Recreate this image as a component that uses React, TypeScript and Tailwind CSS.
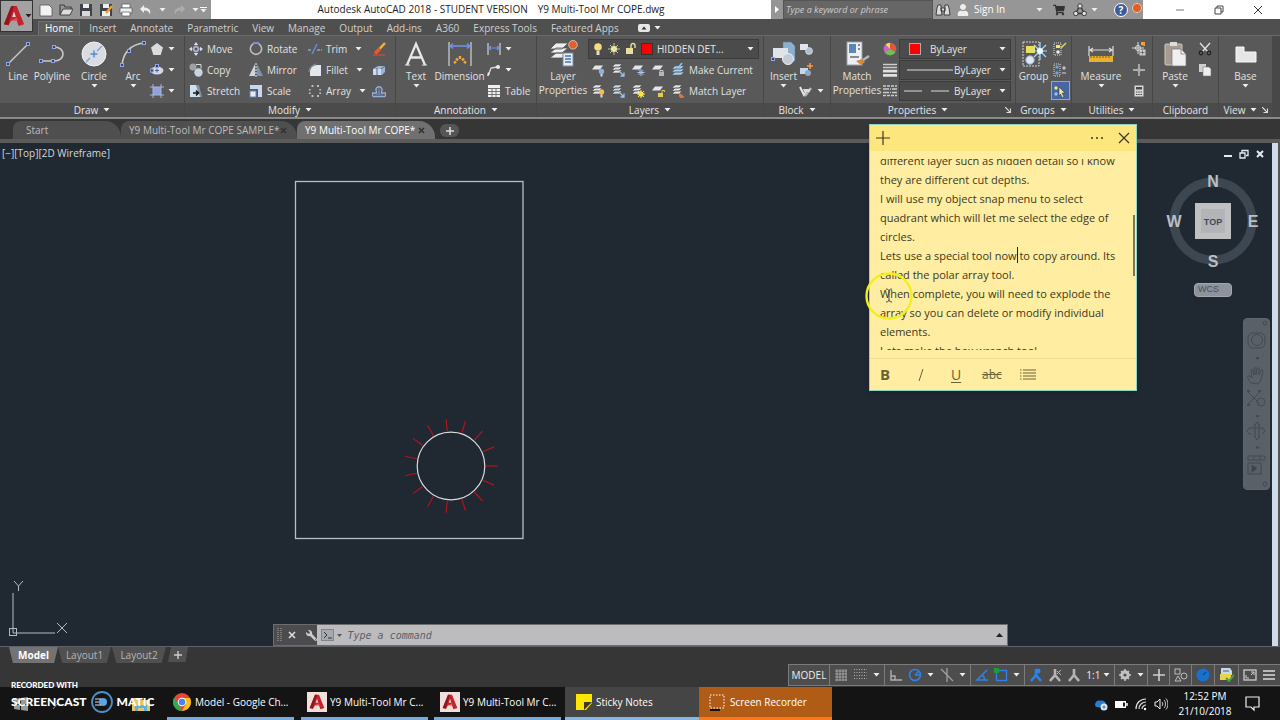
import React from "react";
import { FaWrench, FaShoppingCart, FaUser } from "react-icons/fa";

type Kids = { children?: React.ReactNode };

function Ico({ w = 14, h = 14, box, children }: Kids & { w?: number; h?: number; box?: string }) {
  return (
    <svg width={w} height={h} viewBox={box ?? `0 0 ${w} ${h}`} fill="none" className="block shrink-0" aria-hidden="true">
      {children}
    </svg>
  );
}

function Caret({ dark = false, up = false }: { dark?: boolean; up?: boolean }) {
  return (
    <Ico w={7} h={4}>
      <path d={up ? "M0 4h7L3.500 0z" : "M.5 0h6L3.500 3.500z"} fill={dark ? "#222" : "#eee"} />
    </Ico>
  );
}

function Node({ x, y }: { x: number; y: number }) {
  return <rect x={x - 1.5} y={y - 1.5} width="3" height="3" fill="#39435f" stroke="#8fa6ee" strokeWidth="1" />;
}

/* ---------- small ribbon icons (14 x 14) ---------- */

const polygonIcon = <Ico><path d="M7 1l6 4.500L10.700 13H3.300L1 5.500z" fill="#d9dbdf" /></Ico>;
const ellipseIcon = <Ico><ellipse cx="7" cy="7.500" rx="6.500" ry="4" fill="#d5d8e2" /><path d="M7 5.500v4M5 7.500h4" stroke="#4a5db0" /><Node x={7} y={3} /><Node x={1.8} y={7.5} /></Ico>;
const hatchIcon = <Ico><rect x="3" y="3" width="8" height="8" fill="#8ea2dc" /><path d="M3 0v14M11 0v14M0 3h14M0 11h14" stroke="#a9b4d8" /></Ico>;
const moveIcon = <Ico><path d="M7 0l2.200 3H4.800zM7 14l2.200-3H4.800zM0 7l3-2.200v4.400zM14 7l-3-2.200v4.400z" fill="#d5def5" /><path d="M7 3v8M3 7h8" stroke="#9eb2e6" /><rect x="5" y="5" width="4" height="4" fill="#555" stroke="#d5def5" /></Ico>;
const copyIcon = <Ico><circle cx="4" cy="4" r="3.500" fill="#9da2a8" /><circle cx="9.500" cy="9.500" r="4.200" fill="#c5d6e2" /><path d="M7 1.500h5v4" stroke="#ddd" /></Ico>;
const stretchIcon = <Ico><path d="M1 1h6l5 12H1z" fill="#cfe0ee" /><path d="M7 1h3l3 12h-2z" fill="#7f94a8" /><path d="M4 9h5M7 6.500L9.500 9 7 11.500" stroke="#151515" strokeWidth="1.500" /></Ico>;
const rotateIcon = <Ico><path d="M9.500 1.800A5.600 5.600 0 1 1 4.500 1.800" stroke="#b9bcc4" strokeWidth="1.600" /><path d="M4 1h6" stroke="#7f93d9" strokeWidth="1.800" /></Ico>;
const mirrorIcon = <Ico><path d="M6 1v12H0z" fill="#cfd4da" /><path d="M8 1v12h6z" fill="#7894ad" /><path d="M7 0v14" stroke="#eee" strokeDasharray="2 1" /></Ico>;
const scaleIcon = <Ico><path d="M1 1h12v12H9V5H1z" fill="#c9d7f0" /><rect x="1" y="7" width="6" height="6" fill="#e8edf5" stroke="#5f83c4" /></Ico>;
const trimIcon = <Ico><path d="M0 8h4M9 8h5" stroke="#8fa2c8" strokeWidth="1.400" strokeDasharray="3 1" /><path d="M4 12L9 2" stroke="#6a8ae0" strokeWidth="1.600" /></Ico>;
const filletIcon = <Ico><path d="M2 13V9c0-4 3-7 7-7h4v11z" fill="#e3e6ea" /><path d="M1 9c0-4 3-7 7-8" stroke="#7d96c9" /></Ico>;
const arrayIcon = <Ico><path d="M3.500 2h2M9 2h2M3.500 12h2M9 12h2" stroke="#bdbdbd" strokeWidth="1.800" /><path d="M1.800 5v1.500M12.200 5v1.500M1.800 8.500V10M12.200 8.500V10" stroke="#bdbdbd" strokeWidth="1.800" /></Ico>;
const eraseIcon = <Ico><path d="M1 13h12" stroke="#d94a2b" strokeWidth="1.200" /><path d="M13 1L7 7.500" stroke="#f0b23c" strokeWidth="2.500" /><path d="M8 6.500L3 11.500" stroke="#e35b2c" strokeWidth="3.500" /></Ico>;
const explodeIcon = <Ico><path d="M1 6l5-3h7v6l-3 3H1z" fill="#9bb4d2" /><path d="M1 6h8v6H1z" fill="#cddcec" /><path d="M9 6l4-3M5 5v7" stroke="#4e6b92" /></Ico>;
const offsetIcon = <Ico><path d="M.5 12.500h13M.5 12v-3h4V7.500a3 3 0 1 1 5 0V9h4v3" stroke="#96afd8" strokeWidth="1.300" /><path d="M3 10.700h3.500V6.500a1 1 0 1 1 1 0v4.200H11" stroke="#6882b4" /></Ico>;
const linearIcon = <Ico><path d="M1 1v12M13 1v12" stroke="#c8c8c8" strokeWidth="1.300" /><path d="M2 6h10M4 4L2 6l2 2M10 4l2 2-2 2" stroke="#6d93ee" strokeWidth="1.200" /></Ico>;
const leaderIcon = <Ico><path d="M1 13L4 5l6-1" stroke="#ddd" strokeWidth="1.300" /><circle cx="11" cy="4" r="2" fill="#eee" /><path d="M0 13l1-4 2 2z" fill="#eee" /></Ico>;
const tableIcon = <Ico><rect x="1" y="1" width="12" height="12" fill="#f0f0f0" /><path d="M1 4.500h12M1 7.500h12M1 10.500h12M5 4v9M9 4v9" stroke="#6a6a6a" strokeWidth=".9" /></Ico>;

function LayerStack({ badge, tone = "#e6e9ec" }: { badge: React.ReactNode; tone?: string }) {
  return (
    <Ico>
      <path d="M4 1h7L8 4H1zM4 4h7L8 7H1zM4 7h7l-3 3H1z" fill={tone} stroke="#4b4b4b" strokeWidth=".6" />
      {badge}
    </Ico>
  );
}
function LayerFlat({ badge }: { badge: React.ReactNode }) {
  return (
    <Ico>
      <path d="M4 2.500h8L9 6.500H1z" fill="#e2e6ea" />
      {badge}
    </Ico>
  );
}
const bulbBadge = <g><circle cx="10.500" cy="8" r="2.700" fill="#f2c04a" /><rect x="9.500" y="10.500" width="2" height="3" fill="#ddd" /></g>;
const blueBulb = <g><circle cx="10.500" cy="8.500" r="2.700" fill="#8bb2e0" /><rect x="9.500" y="11" width="2" height="2.500" fill="#ddd" /></g>;
const arrowBadge = <path d="M8 8l5 5M13 9.500V13H9.500" stroke="#9ec4ea" strokeWidth="1.300" />;
const snowBadge = <path d="M10 6v7M6.500 9.500h7M7.500 7l5 5M12.500 7l-5 5" stroke="#a9c6f2" />;
const sunBadge = <g><circle cx="10" cy="10" r="2.600" fill="#ffe14d" /><path d="M10 6v8M6 10h8M7 7l6 6M13 7l-6 6" stroke="#ffe14d" /></g>;
const lockBadge = <g><rect x="8" y="9" width="5" height="4" fill="#b3b7bd" /><path d="M9 9V7.500h3V9" stroke="#ccc" /></g>;
const openLockBadge = <g><rect x="7" y="9" width="5" height="4" fill="#e8c94a" /><path d="M11 9V6.500h2.500V8" stroke="#e8c94a" /></g>;
const matchBadge = <path d="M8 9l5 4-4 .5z" fill="#e0793a" stroke="#e0793a" />;
const currentIcon = <Ico><path d="M4 3h9l-3 3H1zM4 6h9l-3 3H1zM4 9h9l-3 3H1z" fill="#b9d2e4" stroke="#4d6b80" strokeWidth=".7" /><path d="M11 0L7 5 5 3.500" stroke="#8fc3ea" strokeWidth="1.600" /></Ico>;

const blockCreate = <Ico><path d="M1 2h8v6H1z" fill="#dfe5ee" /><circle cx="10" cy="9" r="3.500" fill="#aebfd3" stroke="#e8e8e8" strokeWidth=".6" /></Ico>;
const blockEdit = <Ico><path d="M1 5h8v6H1z" fill="#c9d6ea" /><circle cx="9" cy="10" r="3" fill="#8fa9c9" /><path d="M11 0v6M8 3h6" stroke="#ff9b3a" strokeWidth="1.500" /></Ico>;
const blockAttr = <Ico><path d="M1 3l4 8 2-3" stroke="#e8e8e8" strokeWidth="2" /><path d="M6 12L12 4" stroke="#b8b8b8" strokeWidth="2.400" /><path d="M4 5h7v3H5z" fill="#d8d8d8" /></Ico>;
const wheelIcon = <Ico><circle cx="7" cy="7" r="6.200" fill="#4b86d8" /><path d="M7 7V.8A6.200 6.200 0 0 1 12.400 10z" fill="#e5563a" /><path d="M7 7l5.400 3A6.200 6.200 0 0 1 1.600 10z" fill="#6fc152" /><path d="M7 7L1.600 10A6.200 6.200 0 0 1 2.600 2.600z" fill="#cf62c8" /><path d="M7 7V.8A6.200 6.200 0 0 0 2.600 2.600z" fill="#f3df55" /></Ico>;
const lineweightIcon = <Ico><path d="M0 1.500h14M0 4.500h14" stroke="#ccc" strokeWidth="1.300" /><path d="M0 8.200h14M0 12.400h14" stroke="#e0e0e0" strokeWidth="2.800" /></Ico>;
const linetypeIcon = <Ico><path d="M0 2h14M0 11.500h14" stroke="#ccc" strokeWidth="1.500" strokeDasharray="3 1" /><path d="M0 5h14M0 8.500h14" stroke="#ccc" strokeWidth="1.500" strokeDasharray="6 1 1 1" /></Ico>;
const groupEdit = <Ico><path d="M1 1h7v12H1z" stroke="#ddd" strokeDasharray="1 1" /><rect x="3" y="3" width="4" height="3" fill="#f2ec5a" /><circle cx="5" cy="10" r="1.800" fill="#eee" /><path d="M8 6l5-5" stroke="#d8d84c" strokeWidth="1.600" /></Ico>;
const ungroup = <Ico><path d="M1 1h6v12H1z" stroke="#ddd" strokeDasharray="1 1" /><circle cx="4" cy="4" r="1.700" fill="#6fa3de" /><circle cx="4" cy="10" r="1.700" fill="#6fa3de" /><path d="M9 5h4M11 3v4M9 10h4" stroke="#ddd" /></Ico>;
const groupSelect = <Ico><circle cx="3" cy="4" r="1.700" fill="#f2ec5a" /><circle cx="3" cy="10" r="1.700" fill="#9cc3f5" /><path d="M6 3l6 6H9l2 4-2 .5-1.500-3.500L6 12z" fill="#e9e9a0" stroke="#333" strokeWidth=".5" /></Ico>;
const idPoint = <Ico><path d="M6 0v12M0 6h12" stroke="#ddd" /><circle cx="6" cy="6" r="2.500" stroke="#ddd" /><path d="M9 0h4v4L9 3z" fill="#f0a040" /><rect x="7.500" y="7.500" width="6" height="6" fill="#ccc" /><path d="M8.500 10.500h4M10.500 8.500v4" stroke="#555" strokeWidth=".7" /></Ico>;
const pointStyle = <Ico><path d="M7 1v12M1 7h12" stroke="#c8c8c8" strokeWidth="1.400" /><circle cx="7" cy="7" r="2" fill="#aaa" /></Ico>;
const calcIcon = <Ico><rect x="2.500" y="1.500" width="9" height="11" fill="#d8d8d8" /><rect x="4" y="3" width="6" height="2.500" fill="#4c4c4c" /><path d="M4 8h6M4 10.500h6" stroke="#4c4c4c" strokeDasharray="1.500 .7" /></Ico>;
const cutIcon = <Ico><path d="M2 1l8 9M12 1L4 10" stroke="#e2e2e2" strokeWidth="1.300" /><circle cx="3" cy="11" r="1.800" stroke="#222" strokeWidth="1.200" /><circle cx="11" cy="11" r="1.800" stroke="#222" strokeWidth="1.200" /></Ico>;
const copyClip = <Ico><path d="M1 1h7v8H1z" fill="#cfcfcf" /><path d="M5 4h6l2 2v7H5z" fill="#efefef" stroke="#777" strokeWidth=".6" /></Ico>;

/* ---------- large ribbon icons ---------- */

const lineBig = <Ico w={26} h={26}><path d="M3 23L23 3" stroke="#c9c9c9" strokeWidth="1.500" /><Node x={3} y={23} /><Node x={23} y={3} /></Ico>;
const polyBig = <Ico w={26} h={26}><path d="M2 20h13c12 0 12-14 0-14" stroke="#c9c9c9" strokeWidth="1.600" /><Node x={2} y={20} /><Node x={14} y={20} /><Node x={15} y={6} /></Ico>;
const circleBig = (
  <Ico w={26} h={26}>
    <circle cx="13" cy="13" r="12" fill="#d9dde2" stroke="#f2f2f2" />
    <path d="M5 21l4-4M16 10l5-5" stroke="#7f9cd6" strokeWidth="1.300" />
    <path d="M13 9.500v7M9.500 13h7" stroke="#4f86dc" strokeWidth="1.400" />
  </Ico>
);
const arcBig = <Ico w={26} h={26}><path d="M2 24C3 12 11 3 24 2" stroke="#c9c9c9" strokeWidth="1.600" /><Node x={2} y={24} /><Node x={9} y={10} /><Node x={24} y={2} /></Ico>;
const textBig = <Ico w={26} h={26}><path d="M4 24L13 3l9 21M7.500 16.500h11" stroke="#e6e6e6" strokeWidth="2.300" /><path d="M2 24h5M19 24h5" stroke="#e6e6e6" strokeWidth="1.200" /></Ico>;
const dimBig = (
  <Ico w={26} h={26}>
    <path d="M2 1v24M24 1v24" stroke="#c9c9c9" strokeWidth="1.300" />
    <path d="M3 5h20M6 2.500L3 5l3 2.500M20 2.500L23 5l-3 2.500" stroke="#6d93ee" strokeWidth="1.300" />
    <path d="M7 22l2-1.500M9 17.500l2 2M13 15v3M17 17.500l-2 2M19 22l-2-1.500" stroke="#f2a93b" strokeWidth="2.400" />
  </Ico>
);
const layerBig = (
  <Ico w={30} h={28}>
    <path d="M8 3h12l-6 6H2zM8 8h12l-6 5H2zM8 13h12l-6 5H2z" fill="#eceef0" stroke="#555" strokeWidth=".8" />
    <rect x="15" y="13" width="10" height="13" fill="#e9eef6" stroke="#7f8a9a" />
    <path d="M17 16h6M17 19h6M17 22h6" stroke="#4471b8" strokeWidth="1.300" />
    <circle cx="25" cy="4.800" r="4.300" fill="#de6228" stroke="#e9e2dc" strokeWidth=".7" />
  </Ico>
);
const insertBig = (
  <Ico w={26} h={26}>
    <path d="M12 1h8l4 4v15H12z" fill="#8eb0cf" stroke="#5e7c99" strokeWidth=".6" />
    <path d="M2 7h15v10H2z" fill="#dfe4ea" />
    <circle cx="17" cy="18" r="5.500" fill="#c1ccd8" stroke="#eee" />
    <Node x={2} y={18} />
  </Ico>
);
const matchBig = (
  <Ico w={26} h={26}>
    <rect x="3" y="1" width="15" height="23" fill="#ecEFf4" stroke="#9aa0a8" />
    <rect x="5" y="3" width="7" height="9" fill="#5b86b8" />
    <path d="M14 4h2M14 8h2M6 16h9" stroke="#6b6b6b" strokeWidth="1.300" />
    <path d="M12 20l6-2 3 3-4 3z" fill="#d88938" /><path d="M19 19l6-4" stroke="#b8b8b8" strokeWidth="2.500" />
  </Ico>
);
const groupBig = (
  <Ico w={26} h={26}>
    <path d="M2 1h16v24H2z" stroke="#d5d5d5" strokeDasharray="2 1" />
    <rect x="5" y="5" width="9" height="7" fill="#e8e05a" /><circle cx="9" cy="19" r="4.300" fill="#dfe8f2" stroke="#8aa3bf" />
    <path d="M19 1v18M10 10h16M13 4l12 12M25 4L13 16" stroke="#a8dcff" strokeWidth="1.200" /><circle cx="19" cy="10" r="3" fill="#e8f8ff" />
  </Ico>
);
const measureBig = (
  <Ico w={26} h={26}>
    <path d="M1 5v10M25 5v10M2 9h22M5 7L2 9l3 2M21 7l3 2-3 2" stroke="#dcdcdc" strokeWidth="1.200" />
    <rect x="1" y="15" width="24" height="6" fill="#e9b22e" /><path d="M3 15v2M6 15v2M9 15v2M12 15v2M15 15v2M18 15v2M21 15v2" stroke="#7a5b12" />
  </Ico>
);
const pasteBig = (
  <Ico w={26} h={26}>
    <rect x="3" y="3" width="17" height="21" rx="1" fill="#a79c90" stroke="#d0c8bd" /><rect x="8" y="1" width="7" height="4" fill="#ddd" />
    <path d="M10 8h9l5 5v12H10z" fill="#f0f0f0" stroke="#777" strokeWidth=".7" /><path d="M19 8v5h5" stroke="#777" strokeWidth=".7" />
  </Ico>
);
const baseBig = <Ico w={26} h={26}><path d="M3 6h8v5h12v10H3z" fill="#e6e6e6" stroke="#fafafa" /></Ico>;

/* ---------- ribbon building blocks ---------- */

function Big({ icon, label, caret, width }: { icon: React.ReactNode; label: string[]; caret?: boolean; width: string }) {
  return (
    <button className={`${width} flex shrink-0 flex-col items-center text-[#e2e2e2]`}>
      <span className="flex h-[30px] items-center">{icon}</span>
      {label.map((l) => (
        <span key={l} className="h-[14px] whitespace-nowrap leading-[14px]">{l}</span>
      ))}
      {caret && <span className="mt-px"><Caret /></span>}
    </button>
  );
}

function Small({ icon, label, caret, name }: { icon: React.ReactNode; label?: string; caret?: boolean; name: string }) {
  return (
    <button aria-label={name} className="flex h-5 items-center gap-1 whitespace-nowrap text-[#e2e2e2]">
      {icon}
      {label && <span>{label}</span>}
      {caret && <span className={label ? "ml-1" : ""}><Caret /></span>}
    </button>
  );
}

function Col({ width, children }: Kids & { width: string }) {
  return <div className={`${width} flex shrink-0 flex-col gap-px`}>{children}</div>;
}

function Panel({ title, width, caret = true, launcher, children }: Kids & { title: string; width: string; caret?: boolean; launcher?: boolean }) {
  return (
    <section className={`${width} flex shrink-0 flex-col border-r border-[#474747] bg-[#595959]`}>
      <div className="flex flex-1 px-1 pt-[3px]">{children}</div>
      <div className="flex h-[14px] items-center bg-[#4b4b4b] text-[#e6e6e6]">
        <span className="flex flex-1 items-center justify-center gap-[5px]">
          {title}
          {caret && <Caret />}
        </span>
        {launcher && (
          <button aria-label={`${title} settings`} className="mr-1">
            <Ico w={6} h={6}><path d="M0 0l5 5M5.500 1.500v4h-4" stroke="#ddd" strokeWidth="1.200" /></Ico>
          </button>
        )}
      </div>
    </section>
  );
}

const comboBox = "flex items-center border border-[#3c3c3c] bg-[#4b4b4b] pr-1 text-[#e6e6e6]";

function PropertyCombo({ name, sample }: { name: string; sample: React.ReactNode }) {
  return (
    <div className={`${comboBox} h-5`}>
      <span className="w-[54px] overflow-hidden">{sample}</span>
      <select aria-label={name} className="min-w-0 flex-1 appearance-none bg-transparent outline-none">
        <option>ByLayer</option>
      </select>
      <Caret />
    </div>
  );
}

function Ribbon() {
  return (
    <div className="flex h-[84px] overflow-hidden border-t border-[#6a6a6a] border-b-2 border-b-[#8a8a8a] bg-[#484848]">
      <Panel title="Draw" width="w-[185px]">
        <Big width="w-[28px]" icon={lineBig} label={["Line"]} />
        <Big width="w-[40px]" icon={polyBig} label={["Polyline"]} />
        <Big width="w-[44px]" icon={circleBig} label={["Circle"]} caret />
        <Big width="w-[34px]" icon={arcBig} label={["Arc"]} caret />
        <Col width="w-[30px]">
          <Small name="Polygon" icon={polygonIcon} caret />
          <Small name="Ellipse" icon={ellipseIcon} caret />
          <Small name="Hatch" icon={hatchIcon} caret />
        </Col>
      </Panel>
      <Panel title="Modify" width="w-[211px]">
        <Col width="w-[60px]">
          <Small name="Move" icon={moveIcon} label="Move" />
          <Small name="Copy" icon={copyIcon} label="Copy" />
          <Small name="Stretch" icon={stretchIcon} label="Stretch" />
        </Col>
        <Col width="w-[59px]">
          <Small name="Rotate" icon={rotateIcon} label="Rotate" />
          <Small name="Mirror" icon={mirrorIcon} label="Mirror" />
          <Small name="Scale" icon={scaleIcon} label="Scale" />
        </Col>
        <Col width="w-[64px]">
          <Small name="Trim" icon={trimIcon} label="Trim" caret />
          <Small name="Fillet" icon={filletIcon} label="Fillet" caret />
          <Small name="Array" icon={arrayIcon} label="Array" caret />
        </Col>
        <Col width="w-[16px]">
          <Small name="Erase" icon={eraseIcon} />
          <Small name="Explode" icon={explodeIcon} />
          <Small name="Offset" icon={offsetIcon} />
        </Col>
      </Panel>
      <Panel title="Annotation" width="w-[141px]">
        <Big width="w-[32px]" icon={textBig} label={["Text"]} caret />
        <Big width="w-[55px]" icon={dimBig} label={["Dimension"]} />
        <Col width="w-[46px]">
          <Small name="Linear" icon={linearIcon} caret />
          <Small name="Leader" icon={leaderIcon} caret />
          <Small name="Table" icon={tableIcon} label="Table" />
        </Col>
      </Panel>
      <Panel title="Layers" width="w-[227px]">
        <Big width="w-[44px]" icon={layerBig} label={["Layer", "Properties"]} />
        <div className="ml-[3px] flex min-w-0 flex-1 flex-col gap-px">
          <div className={`${comboBox} h-5 gap-1 pl-1`}>
            <Ico w={10} h={14}><circle cx="5" cy="5" r="3.800" fill="#f6dc7c" /><rect x="3.500" y="9" width="3" height="4" fill="#ddd" /></Ico>
            <Ico><circle cx="7" cy="7" r="3" fill="#f5f0b0" /><path d="M7 1v12M1 7h12M3 3l8 8M11 3l-8 8" stroke="#e6dfa0" strokeWidth=".8" /></Ico>
            <Ico w={12}><rect x="1" y="6" width="7" height="6" fill="#eadf9a" /><path d="M6 6V3.500a2 2 0 0 1 4 0V6" stroke="#eadf9a" strokeWidth="1.400" /></Ico>
            <span className="h-3 w-3 border border-[#333] bg-[#ff0000]" />
            <select aria-label="Layer" className="min-w-0 flex-1 appearance-none bg-transparent outline-none">
              <option>HIDDEN DET...</option>
            </select>
            <Caret />
          </div>
          <div className="flex h-5 items-center gap-[6px] pl-[3px] text-[#e2e2e2]">
            <LayerFlat badge={blueBulb} />
            <LayerStack badge={arrowBadge} />
            <LayerFlat badge={snowBadge} />
            <LayerFlat badge={lockBadge} />
            <button className="flex items-center gap-1 whitespace-nowrap">{currentIcon}Make Current</button>
          </div>
          <div className="flex h-5 items-center gap-[6px] pl-[3px] text-[#e2e2e2]">
            <LayerStack badge={bulbBadge} />
            <LayerStack badge={arrowBadge} tone="#c9dcea" />
            <LayerStack badge={sunBadge} />
            <LayerFlat badge={openLockBadge} />
            <button className="flex items-center gap-1 whitespace-nowrap"><LayerStack badge={matchBadge} />Match Layer</button>
          </div>
        </div>
      </Panel>
      <Panel title="Block" width="w-[67px]">
        <Big width="w-[31px]" icon={insertBig} label={["Insert"]} caret />
        <Col width="w-[28px]">
          <Small name="Create block" icon={blockCreate} />
          <Small name="Edit block" icon={blockEdit} />
          <Small name="Edit attributes" icon={blockAttr} caret />
        </Col>
      </Panel>
      <Panel title="Properties" width="w-[185px]" launcher>
        <Big width="w-[44px]" icon={matchBig} label={["Match", "Properties"]} />
        <div className="ml-1 flex w-[16px] flex-col gap-px">
          <Small name="Colour" icon={wheelIcon} />
          <Small name="Lineweight" icon={lineweightIcon} />
          <Small name="Linetype" icon={linetypeIcon} />
        </div>
        <div className="flex min-w-0 flex-1 flex-col gap-px">
          <div className={`${comboBox} h-5`}>
            <span className="w-[30px] pl-[9px]"><span className="block h-3 w-3 border border-[#aaa] bg-[#ff0000]" /></span>
            <select aria-label="Object colour" className="min-w-0 flex-1 appearance-none bg-transparent outline-none">
              <option>ByLayer</option>
            </select>
            <Caret />
          </div>
          <PropertyCombo name="Object lineweight" sample={<Ico w={54} h={2}><path d="M7 1h46" stroke="#ddd" /></Ico>} />
          <PropertyCombo name="Object linetype" sample={<Ico w={54} h={2}><path d="M4 1h18M31 1h18" stroke="#ddd" /></Ico>} />
        </div>
      </Panel>
      <Panel title="Groups" width="w-[56px]">
        <Big width="w-[27px]" icon={groupBig} label={["Group"]} />
        <div className="ml-1 flex w-[18px] flex-col items-center gap-px">
          <Small name="Group edit" icon={groupEdit} />
          <Small name="Ungroup" icon={ungroup} />
          <button aria-label="Group selection" className="flex h-[19px] w-[19px] items-center justify-center border border-[#86a8dc] bg-[#4667a4]">{groupSelect}</button>
        </div>
      </Panel>
      <Panel title="Utilities" width="w-[81px]">
        <Big width="w-[50px]" icon={measureBig} label={["Measure"]} caret />
        <div className="ml-[6px]">
          <Col width="w-[16px]">
            <Small name="ID point" icon={idPoint} />
            <Small name="Point style" icon={pointStyle} />
            <Small name="Calculator" icon={calcIcon} />
          </Col>
        </div>
      </Panel>
      <Panel title="Clipboard" width="w-[66px]" caret={false}>
        <Big width="w-[36px]" icon={pasteBig} label={["Paste"]} caret />
        <div className="ml-[5px]">
          <Col width="w-[16px]">
            <Small name="Cut" icon={cutIcon} />
            <Small name="Copy clip" icon={copyClip} />
          </Col>
        </div>
      </Panel>
      <Panel title="View" width="w-[54px]" launcher>
        <Big width="w-[45px]" icon={baseBig} label={["Base"]} caret />
      </Panel>
    </div>
  );
}

/* ---------- title bar ---------- */

function AutoLogo({ size }: { size: number }) {
  return (
    <svg width={size} height={size} viewBox="0 0 24 24" className="block shrink-0" aria-hidden="true">
      <path d="M9 1h6l8 20-6 2-2-6H9l-3 5-5-1z" fill="#c4232d" />
      <path d="M9 1h3l-5 16-1 5-5-1z" fill="#8f1720" />
      <path d="M12 7l2 6h-4z" fill="#ead5d5" />
      <path d="M9 17l6-3 1 3z" fill="#e3535a" />
    </svg>
  );
}

function Header() {
  const tabs = ["Insert", "Annotate", "Parametric", "View", "Manage", "Output", "Add-ins", "A360", "Express Tools", "Featured Apps"];
  return (
    <header className="flex h-[35px] bg-[#4f4f4f]">
      <button aria-label="Application menu" className="flex h-8 w-[33px] shrink-0 items-center border border-[#333] bg-[#a2a2a2] pl-[2px]">
        <AutoLogo size={22} />
        <Caret dark />
      </button>
      <div className="flex min-w-0 flex-1 flex-col">
        <div className="flex h-[19px] bg-white">
          <div className="flex w-[178px] shrink-0 items-center bg-[#959595] pl-[6px]">
            <div className="flex flex-1 items-center gap-[6px]">
              <Ico><path d="M1 2h9l3 3v8H1z" fill="#f2f2f2" stroke="#555" strokeWidth=".8" /></Ico>
              <Ico><path d="M1 12V2h4l1 2h6v2" stroke="#444" strokeWidth="1.200" /><path d="M1 12l3-6h10l-3 6z" fill="#ddd" stroke="#444" /></Ico>
              <Ico><path d="M1 1h12v12H1z" fill="#3f4248" /><path d="M4 1h6v4H4z" fill="#eee" /><path d="M3 8h8v5H3z" fill="#d8d8d8" /></Ico>
              <Ico><path d="M1 1h12v12H1z" fill="#3f4248" /><path d="M4 1h6v4H4zM3 8h8v5H3z" fill="#eee" /><path d="M13 3l-6 7" stroke="#f0a030" strokeWidth="2.500" /></Ico>
              <Ico><path d="M3 1h8v4H3z" fill="#fff" stroke="#555" strokeWidth=".7" /><path d="M1 5h12v5H1z" fill="#eee" stroke="#555" strokeWidth=".7" /><path d="M3 9h8v4H3z" fill="#fff" stroke="#555" strokeWidth=".7" /></Ico>
              <Ico><path d="M5 2L1 6l4 4V7.500c4 0 5 1 6 4 1.500-5-2-7-6-7z" fill="#eee" /></Ico>
              <Caret />
              <Ico><path d="M9 2l4 4-4 4V7.500c-4 0-5 1-6 4-1.500-5 2-7 6-7z" fill="#adadad" /></Ico>
              <Caret />
            </div>
            <div className="mr-1 flex flex-col items-center gap-px"><span className="h-px w-[7px] bg-white" /><Caret /></div>
          </div>
          <h1 className="flex min-w-0 flex-1 items-center justify-center gap-[10px] whitespace-nowrap text-[10px] text-[#222]">
            <span>Autodesk AutoCAD 2018 - STUDENT VERSION</span>
            <span>Y9 Multi-Tool Mr COPE.dwg</span>
          </h1>
          <div className="flex w-[372px] shrink-0 items-center bg-[#969696]">
            <span className="flex w-3 justify-center"><Ico w={4} h={7}><path d="M0 0v7l4-3.500z" fill="#fff" /></Ico></span>
            <input aria-label="Search" placeholder="Type a keyword or phrase" className="h-[19px] w-[150px] border border-[#555] bg-[#666] px-[2px] text-[9px] italic text-white outline-none placeholder:text-[#ccc]" />
            <button aria-label="Find" className="ml-[2px]"><Ico w={16}><path d="M3 2h3v3l1 7H1l1-7zM10 2h3l1 3 1 7H9l1-7zM6 5h4v3H6z" fill="#ddd" stroke="#333" strokeWidth=".9" /></Ico></button>
            <button className="ml-[6px] flex flex-1 items-center gap-[5px] text-[10px] text-white"><FaUser className="h-3 w-3 text-[#eee]" />Sign In</button>
            <Caret />
            <FaShoppingCart className="ml-[10px] h-3 w-3 text-[#333]" />
            <span className="ml-2 mr-1"><Ico><path d="M7 2.500L2.500 10.500h9z" stroke="#333" strokeWidth="1.300" /><circle cx="7" cy="3" r="2.200" fill="#e6e6e6" stroke="#333" /><circle cx="2.800" cy="10.500" r="2.200" fill="#e6e6e6" stroke="#333" /><circle cx="11.200" cy="10.500" r="2.200" fill="#e6e6e6" stroke="#333" /></Ico></span>
            <Caret />
            <button aria-label="Help" className="ml-4 flex h-[14px] w-[14px] items-center justify-center rounded-full border border-white bg-[#3d5b98] text-[10px] font-bold leading-none text-white">?</button>
            <span className="mb-1 ml-1 mr-px h-[10px] w-[10px] rounded-full border border-[#eac5ae] bg-[#de6228]" />
          </div>
          <div className="flex w-[137px] shrink-0 items-center justify-between pl-8 pr-[17px]">
            <button aria-label="Minimise"><Ico w={10} h={10}><path d="M1 5h8" stroke="#777" /></Ico></button>
            <button aria-label="Restore"><Ico w={10} h={10}><path d="M1 3h6v6H1zM3 3V1h6v6H7" stroke="#444" /></Ico></button>
            <button aria-label="Close"><Ico w={10} h={10}><path d="M1 1l8 8M9 1L1 9" stroke="#333" /></Ico></button>
          </div>
        </div>
        <nav className="flex flex-1 items-end text-[#d0d0d0]">
          <a href="#home" className="ml-[5px] flex h-[14px] items-center border border-b-0 border-[#707070] bg-[#5d5d5d] px-[6px] text-white">Home</a>
          <div className="ml-[2px] flex">
            {tabs.map((t) => (
              <a key={t} href={`#${t}`} className="flex h-[14px] items-center whitespace-nowrap px-[7px]">{t}</a>
            ))}
          </div>
          <button aria-label="Ribbon display" className="ml-3 flex h-[14px] items-center gap-1">
            <Ico w={12} h={8}><rect width="12" height="8" rx="2" fill="#e6e6e6" /><path d="M3.500 5.500h5L6 2.500z" fill="#333" /></Ico>
            <Caret />
          </button>
        </nav>
      </div>
    </header>
  );
}

function FileTabs() {
  const x = <Ico w={7} h={7}><path d="M1 1l5 5M6 1L1 6" stroke="#303030" strokeWidth="1.500" /></Ico>;
  return (
    <div className="flex h-6 items-end whitespace-nowrap border-b-4 border-[#5b5b5b] bg-[#363636] pl-[13px] text-[#bdbdbd]">
      <a href="#start" className="flex h-[18px] w-[108px] items-center rounded-tl-lg rounded-tr-2xl bg-[#4f4f4f] pl-[13px]">Start</a>
      <a href="#sample" className="flex h-[18px] w-[176px] items-center justify-between rounded-tl-lg rounded-tr-2xl bg-[#4f4f4f] pl-2 pr-[10px]">Y9 Multi-Tool Mr COPE SAMPLE*{x}</a>
      <a href="#cope" className="flex h-[18px] w-[138px] items-center justify-between rounded-tl-lg rounded-tr-2xl bg-[#707070] pl-2 pr-[10px] text-white">Y9 Multi-Tool Mr COPE*{x}</a>
      <button aria-label="New drawing" className="mb-[2px] ml-[5px] flex h-[13px] w-[19px] items-center justify-center rounded-md bg-[#555]">
        <Ico w={8} h={8}><path d="M4 0v8M0 4h8" stroke="#ddd" strokeWidth="1.600" /></Ico>
      </button>
    </div>
  );
}

/* ---------- drawing area ---------- */

const spokes = Array.from({ length: 15 }, (_, i) => (i * 24 * Math.PI) / 180);

function Drawing() {
  return (
    <svg width="530" height="400" className="absolute left-0 top-0" fill="none" aria-label="Multi-tool drawing">
      <rect x="295.500" y="38.500" width="227.500" height="357" stroke="#b9bec4" strokeWidth="1.300" />
      {spokes.map((a) => (
        <path
          key={a}
          d={`M${451 + 35 * Math.cos(a)} ${323 - 35 * Math.sin(a)}L${451 + 47 * Math.cos(a)} ${323 - 47 * Math.sin(a)}`}
          stroke="#b3141e"
          strokeWidth="1.200"
        />
      ))}
      <circle cx="451" cy="323" r="33.800" stroke="#d9dde0" strokeWidth="1.200" />
    </svg>
  );
}

function ViewCube() {
  return (
    <div className="absolute right-[20px] top-[28px]">
      <svg width="94" height="100" viewBox="0 0 94 100" fontFamily="Liberation Sans, Arial, sans-serif" fontWeight="bold" fontSize="16" textAnchor="middle" fill="#b9bfc4" className="block">
        <circle cx="47" cy="50" r="39" fill="none" stroke="#3d4751" strokeWidth="9" />
        <rect x="29" y="32" width="36" height="36" fill="#bfc0c2" />
        <rect x="35" y="38" width="24" height="24" fill="#b2b4b8" />
        <text x="47" y="54" fontSize="9" fill="#404a57">TOP</text>
        <text x="47" y="16">N</text>
        <text x="47" y="96">S</text>
        <text x="8" y="56">W</text>
        <text x="87" y="56">E</text>
      </svg>
      <button className="ml-[28px] mt-[12px] flex h-[14px] w-[38px] items-center rounded border border-[#a3a8b0] bg-[#8d929b] pl-[3px] font-['Liberation_Sans',sans-serif] text-[9px] text-[#4a525e]">WCS</button>
    </div>
  );
}

function NavBar() {
  return (
    <div className="absolute right-[10px] top-[175px] rounded-sm border border-[#5d646b] bg-[#596067]">
      <svg width="25" height="170" viewBox="0 0 25 170" fill="none" stroke="#434a52" strokeWidth="1" className="block" aria-hidden="true">
        <circle cx="21" cy="4" r="2" />
        <rect x="4" y="14" width="17" height="15" rx="5" /><circle cx="13" cy="21" r="5.500" />
        <path d="M12 38.500h3l-1.500 2z" fill="#3b424a" />
        <path d="M7 64c-3-4-4-6-3-7s3 1 4 2l-1-7c0-2 2-2 2 0l1 4v-6c0-2 2-2 2 0v6l1-6c0-2 2-2 2 0v6l2-5c1-1 2 0 2 1l-2 9-3 4z" />
        <path d="M4 73l12 12M16 73L4 85" /><circle cx="17" cy="83" r="4" /><path d="M3 72h3M3 86h3M14 72h3" strokeWidth="2" />
        <path d="M12 96.500h3l-1.500 2z" fill="#3b424a" />
        <path d="M11 105v14M15 105v14M10 107l3-4 3 4M10 117l3 4 3-4M5 109h14l2 3-2 3M7 115H5l-2-3 2-3" />
        <path d="M12 128h3l-1.500 2z" fill="#3b424a" />
        <path d="M4 137h17v4H4zM10 137v4M16 137v4M4 144h13v11H4z" /><path d="M8 146v7l5-3.500z" fill="#3b424a" />
        <circle cx="21" cy="165" r="2" />
      </svg>
    </div>
  );
}

function Canvas() {
  return (
    <main className="relative flex flex-1 flex-col items-center justify-end border-b border-[#5e6266] bg-[#202831]">
      <Drawing />
      <div className="absolute left-[2px] top-[2px] leading-4 text-[#d5d9dc]">[−][Top][2D Wireframe]</div>
      <div className="absolute right-[15px] top-[6px] flex gap-[6px]">
        <button aria-label="Minimise drawing"><Ico w={10} h={10}><path d="M1 7h8" stroke="#e6ebf0" strokeWidth="2" /></Ico></button>
        <button aria-label="Restore drawing"><Ico w={10} h={10}><path d="M1 4h5v5H1zM3 3.500V1.500h6v5H7" stroke="#e6ebf0" strokeWidth="1.300" /></Ico></button>
        <button aria-label="Close drawing"><Ico w={10} h={10}><path d="M2 2l6 6M8 2L2 8" stroke="#e6ebf0" strokeWidth="2" /></Ico></button>
      </div>
      <ViewCube />
      <NavBar />
      <div className="absolute inset-y-0 right-0 w-2 border-r-2 border-[#555] bg-[#cfdaea]" />
      <svg width="72" height="60" viewBox="0 0 72 60" fill="none" stroke="#b5bbc0" className="absolute bottom-[8px] left-0" aria-label="UCS axes">
        <path d="M13 15v40h42M14 3l4.500 5L23 3M18.500 8v5" />
        <path d="M57 45l10 10M67 45L57 55" />
        <rect x="9.500" y="50.500" width="7" height="7" />
      </svg>
      <div className="relative flex h-[22px] w-[735px] items-stretch border border-[#6d6d6d] bg-[#4c4c4e]">
        <div className="flex w-[43px] items-center gap-[6px] pl-[3px]">
          <Ico w={5} h={14}><path d="M1 0v14M4 0v14" stroke="#aaa" strokeDasharray="1 1" /></Ico>
          <button aria-label="Close command line" className="mr-1"><Ico w={8} h={8}><path d="M1 1l6 6M7 1L1 7" stroke="#ddd" strokeWidth="1.600" /></Ico></button>
          <button aria-label="Customise"><FaWrench className="h-[11px] w-[11px] -scale-x-100 text-[#ccc]" /></button>
        </div>
        <label className="flex flex-1 items-center bg-[#bcbcbf] pl-1 pr-1">
          <span className="mr-[3px] flex h-3 w-[13px] items-center justify-center border border-[#80858c] bg-[#a5aab0]">
            <Ico w={9} h={8}><path d="M1 1l3 3-3 3M5 7h4" stroke="#333" /></Ico>
          </span>
          <Ico w={5} h={3}><path d="M0 0h5L2.500 3z" fill="#555" /></Ico>
          <input aria-label="Command" placeholder="Type a command" className="ml-[6px] min-w-0 flex-1 bg-transparent font-['DejaVu_Sans_Mono',monospace] text-[10px] italic outline-none placeholder:text-[#606064]" />
          <Caret dark up />
        </label>
      </div>
    </main>
  );
}

/* ---------- bottom bars ---------- */

function StatusGroup({ width, children }: Kids & { width: string }) {
  return <div className={`${width} flex items-center justify-around border-l border-[#7b7b7b] px-px`}>{children}</div>;
}

function Person({ color, dot }: { color: string; dot?: React.ReactNode }) {
  return (
    <Ico>
      <path d="M7 1v6L2 13M7 7l5 6" stroke={color} strokeWidth="2.600" />
      {dot}
    </Ico>
  );
}

function StatusBar() {
  return (
    <div className="flex h-10 flex-col bg-[#363636]">
      <div className="flex h-4 pl-[9px] text-[10px] leading-4 text-[#b5b5b5]">
        <a href="#model" className="w-[49px] bg-[#737373] text-center font-bold text-white [clip-path:polygon(0_0,100%_0,92%_100%,8%_100%)]">Model</a>
        <a href="#layout1" className="w-[53px] bg-[#505050] text-center [clip-path:polygon(0_0,100%_0,92%_100%,8%_100%)]">Layout1</a>
        <a href="#layout2" className="ml-px w-[54px] bg-[#505050] text-center [clip-path:polygon(0_0,100%_0,92%_100%,8%_100%)]">Layout2</a>
        <button aria-label="New layout" className="ml-[2px] flex h-[15px] w-[20px] items-center justify-center bg-[#505050] [clip-path:polygon(15%_0,100%_0,88%_100%,0_100%)]">
          <Ico w={8} h={8}><path d="M4 0v8M0 4h8" stroke="#ccc" strokeWidth="1.400" /></Ico>
        </button>
      </div>
      <div className="mt-px flex h-[22px] justify-end">
        <div className="flex border-y border-[#7b7b7b] bg-[#4d4d4d] text-[10px] text-[#eee]">
          <StatusGroup width="w-[41px]"><button>MODEL</button></StatusGroup>
          <StatusGroup width="w-[55px]">
            <Ico><path d="M3 1v12M6 1v12M9 1v12M12 1v12M1 3h12M1 6h12M1 9h12M1 12h12" stroke="#a9a9a9" strokeWidth=".9" /></Ico>
            <Ico><path d="M1 1.500h13M1 4.500h13M1 7.500h13M1 10.500h13" stroke="#b0b0b0" strokeDasharray="1 1.500" /></Ico>
            <Caret />
          </StatusGroup>
          <StatusGroup width="w-[86px]">
            <Ico><path d="M2 2v10h11M2 8h4v4" stroke="#b0b0b0" strokeWidth="1.400" /></Ico>
            <Ico><circle cx="7" cy="7" r="5.500" stroke="#2b83ea" strokeWidth="1.600" /><path d="M7 7h6M7 7l4-4" stroke="#2b83ea" strokeWidth="1.400" /></Ico>
            <Caret />
            <Ico><path d="M1 1l12 12M7 0v14" stroke="#a0a0a0" strokeWidth="1.300" /></Ico>
            <Caret />
          </StatusGroup>
          <StatusGroup width="w-[54px]">
            <Ico><path d="M12 2L2 12h11M7 7c2 1 2.500 3 2.500 5" stroke="#2b83ea" strokeWidth="1.500" /></Ico>
            <Ico><rect x="2.500" y="2.500" width="10" height="10" stroke="#2b83ea" strokeWidth="1.400" /><rect width="5" height="5" fill="#1d9b3c" /></Ico>
            <Caret />
          </StatusGroup>
          <StatusGroup width="w-[90px]">
            <Person color="#2b83ea" dot={<circle cx="9" cy="3" r="2.500" fill="#2b83ea" />} />
            <Person color="#b5b5b5" dot={<path d="M9 3l4 4M13 2L9 6" stroke="#b5b5b5" />} />
            <Person color="#b5b5b5" />
            <span className="flex items-center gap-[3px]">1:1<Caret /></span>
          </StatusGroup>
          <StatusGroup width="w-[33px]">
            <Ico><circle cx="7" cy="7" r="3.500" stroke="#c2c2c2" strokeWidth="2.400" /><path d="M7 1v12M1 7h12M3 3l8 8M11 3l-8 8" stroke="#c2c2c2" strokeWidth="1.500" /><circle cx="7" cy="7" r="1.600" fill="#4d4d4d" /></Ico>
            <Caret />
          </StatusGroup>
          <StatusGroup width="w-[22px]"><Ico><path d="M7 1v12M1 7h12" stroke="#d0d0d0" strokeWidth="1.600" /></Ico></StatusGroup>
          <StatusGroup width="w-[22px]"><Ico><rect x="1" y="1" width="5" height="5" stroke="#bbb" /><circle cx="10" cy="8" r="3" stroke="#bbb" /><path d="M4 8l3 5H1z" stroke="#bbb" /></Ico></StatusGroup>
          <StatusGroup width="w-[23px]"><Ico><circle cx="7" cy="7" r="6.500" fill="#1572cf" /><path d="M7 7l3-3" stroke="#0d4b8c" strokeWidth="1.300" /></Ico></StatusGroup>
          <StatusGroup width="w-[24px]"><Ico><path d="M1 0h9l2 3v4H1z" fill="#c9d8ea" /><path d="M3 3h6" stroke="#557" /><rect x="0" y="6" width="11" height="6" fill="#e8d44a" /><path d="M6 10l3 3 5-6" stroke="#44a63c" strokeWidth="2" /></Ico></StatusGroup>
          <StatusGroup width="w-[42px]">
            <Ico><rect x="1" y="2" width="12" height="10" stroke="#ccc" strokeWidth="1.300" /><path d="M8 4h3v3M11 4L8 7M6 10H3V7" stroke="#ccc" /></Ico>
            <Ico><path d="M1 3h12M1 7h12M1 11h12" stroke="#ddd" strokeWidth="1.400" /></Ico>
          </StatusGroup>
        </div>
      </div>
    </div>
  );
}

function Task({ label, icon, tone, line }: { label: string; icon: React.ReactNode; tone: string; line: string }) {
  return (
    <button className={`${tone} flex h-full shrink-0 items-center whitespace-nowrap border-b-[3px] ${line} text-[10px] text-white`}>
      {icon}
      {label}
    </button>
  );
}

const acadTile = <span className="flex h-[20px] w-[20px] items-center justify-center bg-[#f1dfdc]"><AutoLogo size={16} /></span>;

function Taskbar() {
  return (
    <footer className="relative flex h-[33px] bg-[#141414]">
      <div className="flex w-[167px] shrink-0 items-center pl-[14px]">
        <Ico><path d="M0 2l6-1v6H0zM7 1l7-1v7H7zM0 8h6v5l-6-1zM7 8h7v6l-7-1z" fill="#999" /></Ico>
        <span className="ml-[24px]"><Ico><path d="M1 12l5-6" stroke="#888" /></Ico></span>
        <span className="ml-[66px]"><Ico w={18}><path d="M0 1h7l1 2h10v11H0z" fill="#e3c566" /><path d="M3 14V8h12v6h-3v-3H6v3z" fill="#55b3e6" /></Ico></span>
      </div>
      <Task
        label="Model - Google Ch..."
        tone="w-[127px] gap-1 pl-[6px]"
        line="border-[#76a9dc]"
        icon={
          <Ico w={18} h={18}>
            <circle cx="9" cy="9" r="9" fill="#e9453a" />
            <path d="M1.200 4.500L6 12l3 6A9 9 0 0 1 1.200 4.500z" fill="#34a853" />
            <path d="M17 5H9l4 6-4 7A9 9 0 0 0 17 5z" fill="#fbc116" />
            <circle cx="9" cy="9" r="4.300" fill="#fff" />
            <circle cx="9" cy="9" r="3.300" fill="#4285f4" />
          </Ico>
        }
      />
      <Task label="Y9 Multi-Tool Mr C..." tone="ml-[7px] w-[127px] pl-[6px] gap-[3px]" line="border-[#76a9dc]" icon={acadTile} />
      <Task label="Y9 Multi-Tool Mr C..." tone="ml-[6px] w-[127px] pl-[6px] gap-[3px]" line="border-[#76a9dc]" icon={acadTile} />
      <Task
        label="Sticky Notes"
        tone="ml-1 w-[134px] bg-[#454545] pl-[11px] gap-1"
        line="border-[#85b5e2]"
        icon={<Ico w={16} h={16}><path d="M0 0h16v9l-6 7H0z" fill="#ffe600" /><path d="M8 8h8l-8 8z" fill="#3b3b20" /></Ico>}
      />
      <Task
        label="Screen Recorder"
        tone="w-[133px] bg-[#b05c17] pl-[10px] gap-[5px]"
        line="border-[#ff7716]"
        icon={<Ico w={16} h={18}><rect x="1" y="2" width="14" height="13" stroke="#fff" strokeDasharray="1.500 1.500" /><path d="M1 17h10" stroke="#111" strokeWidth="2" /></Ico>}
      />
      <div className="ml-auto flex items-center gap-[6px] pr-[20px] text-white">
        <Ico><circle cx="5" cy="7" r="3.500" fill="#2b7bd0" /><path d="M2 10a3 3 0 0 1 3-5 4 4 0 0 1 7 2v3z" fill="#2b7bd0" /><circle cx="10" cy="10" r="3.500" fill="#dbe6f2" /><path d="M8.500 10h3M10 8.500v3" stroke="#3471b5" /></Ico>
        <Ico><rect x="1" y="4" width="11" height="7" fill="#fff" /><path d="M13 6v3" stroke="#fff" strokeWidth="1.500" /><rect x="9" y="5.500" width="2" height="4" fill="#222" /></Ico>
        <Ico><path d="M2 12C2 6 6 2 12 2M5 12c0-4 3-7 7-7M8 12c0-2 2-4 4-4" stroke="#ddd" strokeWidth="1.200" /><circle cx="11" cy="12" r="1.200" fill="#fff" /></Ico>
        <Ico><path d="M1 5h2l3-3v10L3 9H1z" stroke="#eee" /><path d="M8 5c1 1 1 3 0 4M10 3c2 2 2 6 0 8M12 1.500c2.500 3 2.500 8 0 11" stroke="#ddd" strokeWidth=".9" /></Ico>
        <div className="ml-px w-[60px] text-center leading-[15px]">
          <div>12:52 PM</div>
          <div>21/10/2018</div>
        </div>
        <button aria-label="Notifications" className="ml-1"><Ico w={15} h={16}><path d="M1 1h13v10H9v3l-3-3H1z" stroke="#eee" strokeWidth="1.200" /></Ico></button>
      </div>
      <div className="absolute bottom-[7px] left-[11px] font-['Lato',sans-serif] font-black text-white">
        <div className="text-[8px] leading-[10px]">RECORDED WITH</div>
        <div className="flex h-[23px] items-center gap-[3px] text-[12px]">
          SCREENCAST
          <Ico w={24} h={24}><circle cx="12" cy="12" r="10" stroke="#4a8fca" strokeWidth="1.800" /><circle cx="13" cy="12" r="4" fill="#5aa5e6" /><path d="M5 9h6M5 15h6M5 12h4" stroke="#ddd" /></Ico>
          MATIC
        </div>
      </div>
    </footer>
  );
}

/* ---------- sticky note ---------- */

const noteText = [
  "different layer such as hidden detail so I know",
  "they are different cut depths.",
  "I will use my object snap menu to select",
  "quadrant which will let me select the edge of",
  "circles.",
  "Lets use a special tool now to copy around. Its",
  "called the polar array tool.",
  "When complete, you will need to explode the",
  "array so you can delete or modify individual",
  "elements.",
  "Lets make the hex wrench tool.",
].join("\n");

function StickyNote() {
  return (
    <aside className="absolute right-[143px] top-[124px] w-[268px] border border-[#8fd3c4] bg-[#ffeea2] text-[#3c3820] shadow-md">
      <div className="flex h-[26px] items-center bg-[#fee67e] px-[6px]">
        <button aria-label="New note" className="mr-auto"><Ico><path d="M7 0v14M0 7h14" stroke="#3c3820" strokeWidth="1.200" /></Ico></button>
        <button aria-label="Menu" className="mr-[14px]"><Ico w={14} h={4}><path d="M1 2h2M6 2h2M11 2h2" stroke="#3c3820" strokeWidth="1.500" /></Ico></button>
        <button aria-label="Close note"><Ico w={12} h={12}><path d="M1 1l10 10M11 1L1 11" stroke="#3c3820" strokeWidth="1.200" /></Ico></button>
      </div>
      <div className="mt-2 h-[191px] overflow-hidden">
        <textarea aria-label="Note" rows={11} defaultValue={noteText} className="-mt-2 ml-[10px] block w-[250px] resize-none overflow-hidden whitespace-pre bg-transparent text-[11px] leading-[19px] outline-none" />
      </div>
      <span className="absolute right-px top-[90px] h-[61px] w-[2px] bg-[#7d7755]" />
      <span className="absolute left-[147px] top-[122px] h-4 w-px bg-[#222]" />
      <div className="mt-2 flex h-8 items-center border-t border-[#f0dd8f] pl-[10px] text-[15px] text-[#6b6334]">
        <button aria-label="Bold" className="w-[36px] text-left font-bold">B</button>
        <button aria-label="Italic" className="w-[35px] pl-px text-left"><Ico w={8} h={14}><path d="M6 1L2 13" stroke="#6b6334" /></Ico></button>
        <button aria-label="Underline" className="w-[31px] text-left text-[14px] underline underline-offset-2">U</button>
        <button aria-label="Strikethrough" className="w-[38px] text-left text-[12px] line-through">abc</button>
        <button aria-label="Bullets"><Ico w={16} h={12}><path d="M3 1h13M3 4h13M3 7h13M3 10h13" stroke="#6b6334" /><path d="M0 1h1.500M0 4h1.500M0 7h1.500M0 10h1.500" stroke="#6b6334" /></Ico></button>
      </div>
      <svg width="50" height="50" viewBox="0 0 50 50" fill="none" className="pointer-events-none absolute left-[-6px] top-[146px]" aria-hidden="true">
        <circle cx="25" cy="25" r="22.500" stroke="#f4ee1c" strokeWidth="2.400" />
        <path d="M22 18c2 0 3 1 3 2 0-1 1-2 3-2M25 20v10M22 31c2 0 3-1 3-2 0 1 1 2 3 2" stroke="#444" />
      </svg>
    </aside>
  );
}

export default function App() {
  return (
    <div className="relative flex min-h-screen flex-col overflow-hidden bg-[#363636] font-['Open_Sans','Noto_Sans',sans-serif] text-[10px]">
      <Header />
      <Ribbon />
      <FileTabs />
      <Canvas />
      <StatusBar />
      <Taskbar />
      <StickyNote />
    </div>
  );
}
